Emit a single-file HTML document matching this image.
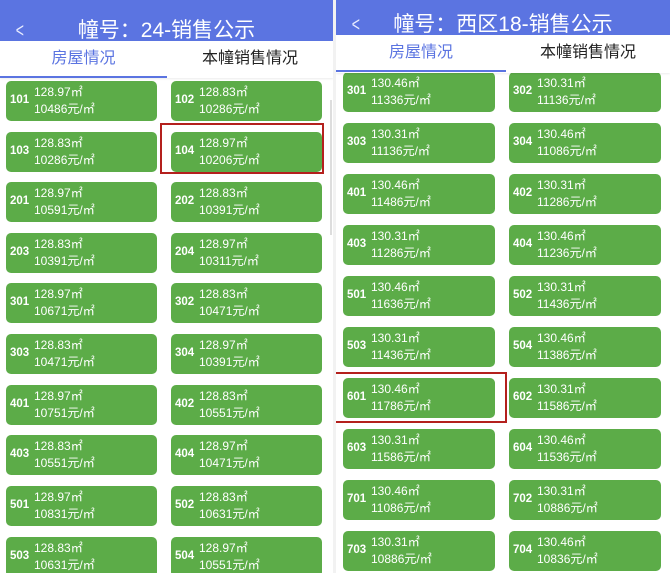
<!DOCTYPE html>
<html><head><meta charset="utf-8"><style>
*{margin:0;padding:0;box-sizing:border-box}
body{width:670px;height:573px;overflow:hidden;background:#fff;position:relative;font-family:"Liberation Sans","Noto Sans CJK SC",sans-serif}
.p{position:absolute;top:0;height:573px;overflow:hidden;background:#fff}
.hd{position:absolute;left:0;right:0;top:0;background:#5b74e1;color:#fff;font-size:21px;text-align:center}
.bk{position:absolute;left:14px;font-size:20px;color:#e8ecff;transform:scaleX(.7)}
.tabs{position:absolute;left:0;right:0;background:#fff;z-index:2;box-shadow:0 1px 2px rgba(0,0,0,.08)}
.t{position:absolute;top:0;font-size:16px;text-align:center}
.t1{color:#5b74e1}.t2{color:#222}
.ul{position:absolute;height:2px;background:#5b74e1;bottom:0}
.c{position:absolute;height:40px;background:#5cac48;border-radius:5px;color:#fff}
.c b{position:absolute;left:4px;top:13px;font-size:11.5px;font-weight:bold}
.c i{position:absolute;left:28px;top:3px;font-size:12px;font-style:normal;line-height:17px}
.r{position:absolute;border:2px solid #b4201d;z-index:3}
</style></head><body>
<div class="p" style="left:0;width:333px">
<div class="hd" style="height:41px;line-height:62px"><span class="bk" style="top:0;line-height:62px">&lt;</span>幢号：24-销售公示</div>
<div class="tabs" style="top:41px;height:37px">
<div class="t t1" style="left:0;width:167px;line-height:36px">房屋情况</div>
<div class="t t2" style="left:167px;width:166px;line-height:36px">本幢销售情况</div>
<div class="ul" style="left:0;width:167px"></div></div>
<div style="position:absolute;left:330px;top:100px;width:2px;height:135px;background:#ddd"></div>
<div class="c" style="left:6px;top:81px;width:151px"><b>101</b><i>128.97㎡<br>10486元/㎡</i></div>
<div class="c" style="left:171px;top:81px;width:151px"><b>102</b><i>128.83㎡<br>10286元/㎡</i></div>
<div class="c" style="left:6px;top:132px;width:151px"><b>103</b><i>128.83㎡<br>10286元/㎡</i></div>
<div class="c" style="left:171px;top:132px;width:151px"><b>104</b><i>128.97㎡<br>10206元/㎡</i></div>
<div class="c" style="left:6px;top:182px;width:151px"><b>201</b><i>128.97㎡<br>10591元/㎡</i></div>
<div class="c" style="left:171px;top:182px;width:151px"><b>202</b><i>128.83㎡<br>10391元/㎡</i></div>
<div class="c" style="left:6px;top:233px;width:151px"><b>203</b><i>128.83㎡<br>10391元/㎡</i></div>
<div class="c" style="left:171px;top:233px;width:151px"><b>204</b><i>128.97㎡<br>10311元/㎡</i></div>
<div class="c" style="left:6px;top:283px;width:151px"><b>301</b><i>128.97㎡<br>10671元/㎡</i></div>
<div class="c" style="left:171px;top:283px;width:151px"><b>302</b><i>128.83㎡<br>10471元/㎡</i></div>
<div class="c" style="left:6px;top:334px;width:151px"><b>303</b><i>128.83㎡<br>10471元/㎡</i></div>
<div class="c" style="left:171px;top:334px;width:151px"><b>304</b><i>128.97㎡<br>10391元/㎡</i></div>
<div class="c" style="left:6px;top:385px;width:151px"><b>401</b><i>128.97㎡<br>10751元/㎡</i></div>
<div class="c" style="left:171px;top:385px;width:151px"><b>402</b><i>128.83㎡<br>10551元/㎡</i></div>
<div class="c" style="left:6px;top:435px;width:151px"><b>403</b><i>128.83㎡<br>10551元/㎡</i></div>
<div class="c" style="left:171px;top:435px;width:151px"><b>404</b><i>128.97㎡<br>10471元/㎡</i></div>
<div class="c" style="left:6px;top:486px;width:151px"><b>501</b><i>128.97㎡<br>10831元/㎡</i></div>
<div class="c" style="left:171px;top:486px;width:151px"><b>502</b><i>128.83㎡<br>10631元/㎡</i></div>
<div class="c" style="left:6px;top:537px;width:151px"><b>503</b><i>128.83㎡<br>10631元/㎡</i></div>
<div class="c" style="left:171px;top:537px;width:151px"><b>504</b><i>128.97㎡<br>10551元/㎡</i></div>
<div class="r" style="left:160px;top:123px;width:164px;height:51px"></div>
</div>
<div style="position:absolute;left:333px;top:0;width:3px;height:573px;background:#f2f2f2"></div>
<div class="p" style="left:336px;width:334px">
<div class="hd" style="height:35px;line-height:50px"><span class="bk" style="top:0;line-height:50px">&lt;</span>幢号：西区18-销售公示</div>
<div class="tabs" style="top:35px;height:38px">
<div class="t t1" style="left:0;width:170px;line-height:36px">房屋情况</div>
<div class="t t2" style="left:170px;width:164px;line-height:36px">本幢销售情况</div>
<div class="ul" style="left:0;width:170px;bottom:1px"></div></div>
<div class="c" style="left:7px;top:72px;width:152px"><b>301</b><i>130.46㎡<br>11336元/㎡</i></div>
<div class="c" style="left:173px;top:72px;width:152px"><b>302</b><i>130.31㎡<br>11136元/㎡</i></div>
<div class="c" style="left:7px;top:123px;width:152px"><b>303</b><i>130.31㎡<br>11136元/㎡</i></div>
<div class="c" style="left:173px;top:123px;width:152px"><b>304</b><i>130.46㎡<br>11086元/㎡</i></div>
<div class="c" style="left:7px;top:174px;width:152px"><b>401</b><i>130.46㎡<br>11486元/㎡</i></div>
<div class="c" style="left:173px;top:174px;width:152px"><b>402</b><i>130.31㎡<br>11286元/㎡</i></div>
<div class="c" style="left:7px;top:225px;width:152px"><b>403</b><i>130.31㎡<br>11286元/㎡</i></div>
<div class="c" style="left:173px;top:225px;width:152px"><b>404</b><i>130.46㎡<br>11236元/㎡</i></div>
<div class="c" style="left:7px;top:276px;width:152px"><b>501</b><i>130.46㎡<br>11636元/㎡</i></div>
<div class="c" style="left:173px;top:276px;width:152px"><b>502</b><i>130.31㎡<br>11436元/㎡</i></div>
<div class="c" style="left:7px;top:327px;width:152px"><b>503</b><i>130.31㎡<br>11436元/㎡</i></div>
<div class="c" style="left:173px;top:327px;width:152px"><b>504</b><i>130.46㎡<br>11386元/㎡</i></div>
<div class="c" style="left:7px;top:378px;width:152px"><b>601</b><i>130.46㎡<br>11786元/㎡</i></div>
<div class="c" style="left:173px;top:378px;width:152px"><b>602</b><i>130.31㎡<br>11586元/㎡</i></div>
<div class="c" style="left:7px;top:429px;width:152px"><b>603</b><i>130.31㎡<br>11586元/㎡</i></div>
<div class="c" style="left:173px;top:429px;width:152px"><b>604</b><i>130.46㎡<br>11536元/㎡</i></div>
<div class="c" style="left:7px;top:480px;width:152px"><b>701</b><i>130.46㎡<br>11086元/㎡</i></div>
<div class="c" style="left:173px;top:480px;width:152px"><b>702</b><i>130.31㎡<br>10886元/㎡</i></div>
<div class="c" style="left:7px;top:531px;width:152px"><b>703</b><i>130.31㎡<br>10886元/㎡</i></div>
<div class="c" style="left:173px;top:531px;width:152px"><b>704</b><i>130.46㎡<br>10836元/㎡</i></div>
<div class="r" style="left:-6px;top:372px;width:177px;height:51px"></div>
</div>
</body></html>
